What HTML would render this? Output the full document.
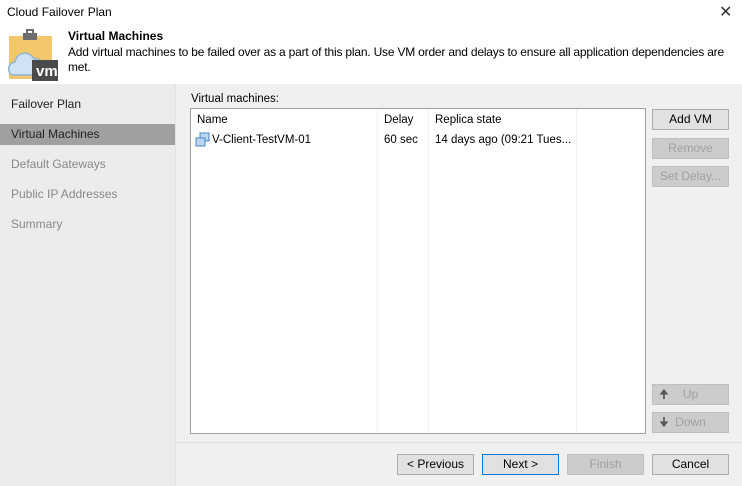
<!DOCTYPE html>
<html><head><style>
*{margin:0;padding:0;box-sizing:border-box}
body{width:742px;height:486px;background:#f0f0f0;font-family:"Liberation Sans",sans-serif;font-size:11.5px;color:#000;position:relative;overflow:hidden}
.a{position:absolute}
.btn{position:absolute;width:77px;height:21px;border:1px solid #adadad;background:#e1e1e1;text-align:center;line-height:19px;font-size:12px}
.dis{color:#a0a0a0;background:#cccccc;border-color:#bfbfbf}
.nav{position:absolute;left:11px;font-size:12px;color:#222}
</style></head><body>
<div class="a" style="left:0;top:0;width:742px;height:84px;background:#fff"></div>
<div class="a" style="left:7px;top:5px;font-size:12px">Cloud Failover Plan</div>
<div class="a" style="left:719px;top:2px;font-size:16px;color:#333">✕</div>
<svg class="a" style="left:8px;top:29px" width="50" height="52" viewBox="0 0 50 52">
<rect x="1" y="7" width="43" height="43" fill="#f3c76b"/>
<rect x="15" y="4" width="14" height="7" fill="#6d6d6d"/><rect x="19" y="1" width="6" height="4" fill="none" stroke="#6d6d6d" stroke-width="2"/>
<path d="M4 46 a7 7 0 0 1 3-13 a10 10 0 0 1 19-3 a7 7 0 0 1 9 6 v10z" fill="#cfe3f4" stroke="#8fb4d4" stroke-width="1.5"/>
<rect x="24" y="31" width="32" height="22" fill="#4a4a4a"/>
<text x="28" y="47" fill="#fff" font-family="Liberation Sans" font-weight="bold" font-size="15">vm</text>
</svg>
<div class="a" style="left:68px;top:29px;font-weight:bold;font-size:12px">Virtual Machines</div>
<div class="a" style="left:68px;top:45px;width:672px;font-size:12px;line-height:15px;letter-spacing:-0.2px">Add virtual machines to be failed over as a part of this plan. Use VM order and delays to ensure all application dependencies are met.</div>
<div class="a" style="left:0;top:84px;width:176px;height:402px;background:#ececec;border-right:1px solid #e2e2e2"></div>
<div class="nav" style="top:97px">Failover Plan</div>
<div class="a" style="left:0;top:124px;width:175px;height:21px;background:#a0a0a0"></div>
<div class="nav" style="top:127px">Virtual Machines</div>
<div class="nav" style="top:157px;color:#888">Default Gateways</div>
<div class="nav" style="top:187px;color:#888">Public IP Addresses</div>
<div class="nav" style="top:217px;color:#888">Summary</div>
<div class="a" style="left:191px;top:93px;font-size:11.5px">Virtual machines:</div>
<div class="a" style="left:190px;top:108px;width:456px;height:326px;background:#fff;border:1px solid #a0a0a0"></div>
<div class="a" style="left:377px;top:109px;width:1px;height:324px;background:#eef3f8"></div>
<div class="a" style="left:428px;top:109px;width:1px;height:324px;background:#eef3f8"></div>
<div class="a" style="left:576px;top:109px;width:1px;height:324px;background:#eef3f8"></div>
<div class="a" style="left:197px;top:114px">Name</div>
<div class="a" style="left:384px;top:114px">Delay</div>
<div class="a" style="left:435px;top:114px">Replica state</div>
<svg class="a" style="left:195px;top:132px" width="16" height="16"><rect x="5" y="1" width="9" height="8" fill="#bcd6ef" stroke="#4a86c5"/><rect x="1" y="6" width="9" height="8" fill="#bcd6ef" stroke="#4a86c5"/></svg>
<div class="a" style="left:212px;top:134px">V-Client-TestVM-01</div>
<div class="a" style="left:384px;top:134px">60 sec</div>
<div class="a" style="left:435px;top:134px">14 days ago (09:21 Tues...</div>
<div class="btn" style="left:652px;top:109px">Add VM</div>
<div class="btn dis" style="left:652px;top:138px">Remove</div>
<div class="btn dis" style="left:652px;top:166px">Set Delay...</div>
<div class="btn dis" style="left:652px;top:384px"><span style="position:absolute;left:6px;color:#555">🠉</span>Up</div>
<div class="btn dis" style="left:652px;top:412px"><span style="position:absolute;left:6px;color:#555">🠋</span>Down</div>
<div class="a" style="left:176px;top:442px;width:566px;height:1px;background:#e0e0e0"></div>
<div class="btn" style="left:397px;top:454px">&lt; Previous</div>
<div class="btn" style="left:482px;top:454px;border:1px solid #0078d7">Next &gt;</div>
<div class="btn dis" style="left:567px;top:454px">Finish</div>
<div class="btn" style="left:652px;top:454px">Cancel</div>
</body></html>
